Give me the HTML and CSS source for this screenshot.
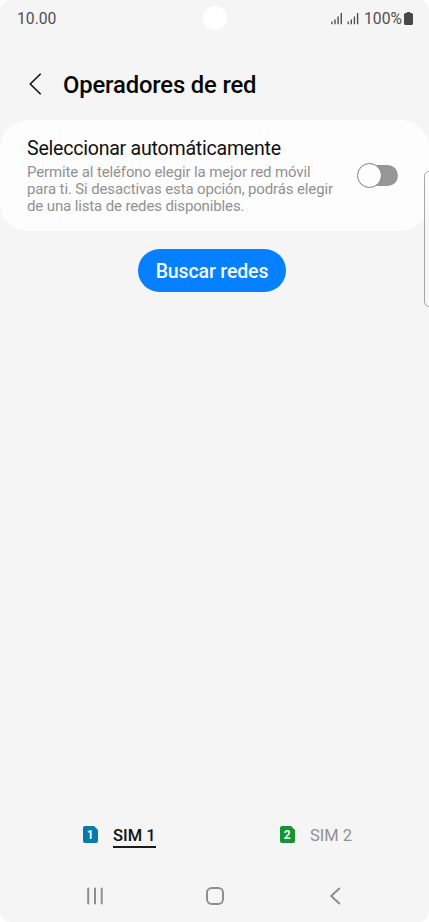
FILE: index.html
```html
<!DOCTYPE html>
<html lang="es">
<head>
<meta charset="utf-8">
<title>Operadores de red</title>
<link rel="stylesheet" href="styles.css">
</head>
<body>
<div class="screen">
  <div class="status">
    <span class="time">10.00</span>
    <span class="camera"></span>
    <div class="indicators">
      <svg class="signals" width="28" height="13" viewBox="0 0 28 13" fill="none" stroke="#505050" stroke-width="1.4">
        <path d="M.9 9.5v2.8M4 7.5v4.8M7.1 4.5v7.8M10.3 1v11.3M17.2 9.5v2.8M20.3 7.5v4.8M23.4 4.5v7.8M26.6 1v11.3"/>
      </svg>
      <span class="percent">100%</span>
      <svg class="battery" width="9" height="13" viewBox="0 0 9 13" fill="#484848">
        <path d="M2.7 1Q2.7 0 3.6 0H5.4Q6.3 0 6.3 1H7.4Q9 1 9 2.6V11.4Q9 13 7.4 13H1.6Q0 13 0 11.4V2.6Q0 1 1.6 1Z"/>
      </svg>
    </div>
  </div>
  <header class="header">
    <svg class="back" width="13" height="22" viewBox="0 0 13 22" fill="none" stroke="#111" stroke-width="1.6" stroke-linecap="round" stroke-linejoin="round"><path d="M11.2 1.2 1.2 11 11.2 20.8"/></svg>
    <h1 class="title">Operadores de red</h1>
  </header>
  <section class="card">
    <div class="copy">
      <h2 class="name">Seleccionar automáticamente</h2>
      <p class="desc">Permite al teléfono elegir la mejor red móvil<br>para ti. Si desactivas esta opción, podrás elegir<br>de una lista de redes disponibles.</p>
    </div>
    <div class="toggle"><span class="knob"></span></div>
  </section>
  <button class="search">Buscar redes</button>
  <div class="edge"></div>
  <div class="sims">
    <div class="sim active">
      <svg width="15" height="17" viewBox="0 0 15 17"><path fill="#087aae" d="M2 0H11L15 4V15Q15 17 13 17H2Q0 17 0 15V2Q0 0 2 0Z"/><text class="digit" x="7.2" y="12.8">1</text></svg>
      <span class="label">SIM 1</span>
    </div>
    <div class="sim">
      <svg width="15" height="17" viewBox="0 0 15 17"><path fill="#15952f" d="M2 0H11L15 4V15Q15 17 13 17H2Q0 17 0 15V2Q0 0 2 0Z"/><text class="digit" x="7.3" y="12.8">2</text></svg>
      <span class="label">SIM 2</span>
    </div>
  </div>
  <nav class="nav">
    <svg width="18" height="18" viewBox="0 0 18 18" fill="none" stroke="#8e8e8e" stroke-width="2" stroke-linecap="round"><path d="M2.2 1.5v15M9 1.5v15M15.7 1.5v15"/></svg>
    <svg width="18" height="18" viewBox="0 0 18 18" fill="none" stroke="#8e8e8e" stroke-width="2"><rect x="1" y="1" width="16" height="16" rx="4.7"/></svg>
    <svg width="18" height="18" viewBox="0 0 18 18" fill="none" stroke="#8e8e8e" stroke-width="2" stroke-linecap="round" stroke-linejoin="round"><path d="M13.3 1.5 5.2 9l8.1 7.5"/></svg>
  </nav>
</div>
</body>
</html>
```
FILE: styles.css
```css
* { box-sizing: border-box; }
body { margin: 0; background: #fff; font-family: Roboto, sans-serif; }
h1, h2, p { margin: 0; font-weight: 400; white-space: nowrap; }
svg { display: block; flex: none; }
.screen {
  position: relative;
  display: flex;
  flex-direction: column;
  width: 429px;
  height: 922px;
  background: #f5f5f5;
  border-radius: 11px;
  overflow: hidden;
}
.status {
  display: grid;
  grid-template-columns: 1fr 24px 1fr;
  align-items: center;
  height: 37px;
  padding: 0 16px 0 17px;
  color: #505050;
  font-size: 15.7px;
}
.camera { width: 24px; height: 24px; margin: -1px 0 0 -.5px; border-radius: 50%; background: #fff; }
.indicators { display: flex; align-items: center; justify-content: flex-end; }
.signals { margin-right: 5.4px; }
.battery { margin-left: 2px; }
.header { display: flex; align-items: center; height: 83px; padding: 11px 0 0 29px; }
.title { margin: 1px 0 0 21px; font-size: 23.8px; letter-spacing: -.14px; font-weight: 500; line-height: 30px; color: #050505; }
.card {
  display: flex;
  align-items: flex-start;
  justify-content: space-between;
  flex: none;
  height: 111px;
  padding: 17px 31px 0 27px;
  background: #fdfdfd;
  border-radius: 28px;
}
.name { font-size: 19.6px; letter-spacing: -.25px; line-height: 24px; color: #111; }
.desc { margin-top: 2.5px; font-size: 15px; letter-spacing: -.13px; line-height: 17.2px; color: #919191; }
.toggle {
  width: 36px;
  height: 21px;
  margin-top: 28px;
  border-radius: 11px;
  background: #969696;
}
.knob {
  display: block;
  width: 25px;
  height: 25px;
  margin: -2px 0 0 -5px;
  border: 1px solid #818181;
  border-radius: 50%;
  background: #fdfdfd;
}
.search {
  flex: none;
  align-self: center;
  width: 148px;
  height: 43px;
  margin: 18px 5px 0 0;
  padding: 2px 0 0;
  border: 0;
  border-radius: 22px;
  background: #0680fe;
  color: #f3faff;
  font: 500 19.5px/41px Roboto, sans-serif;
  letter-spacing: -.14px;
}
.edge {
  position: absolute;
  left: 424px;
  top: 171px;
  width: 12px;
  height: 136px;
  border: 1px solid #a8a8a8;
  border-radius: 5px;
  background: linear-gradient(#fdfdfd, #f6f6f6 45%);
}
.sims { display: flex; margin-top: auto; padding-left: 83px; height: 44px; }
.sim { display: flex; flex: none; gap: 15px; width: 197px; color: #919191; font-size: 16.5px; }
.sim:last-child { width: auto; }
.sim svg { margin-top: 1px; }
.label { height: 23px; line-height: 22px; white-space: nowrap; }
.active { color: #111; }
.active .label { border-bottom: 2px solid #1c1c1c; font-weight: 500; }
.digit { fill: #eefaff; font: 700 12px Roboto, sans-serif; text-anchor: middle; }
.nav { display: flex; justify-content: space-between; padding: 18px 85px 0 86px; height: 53px; }
```
